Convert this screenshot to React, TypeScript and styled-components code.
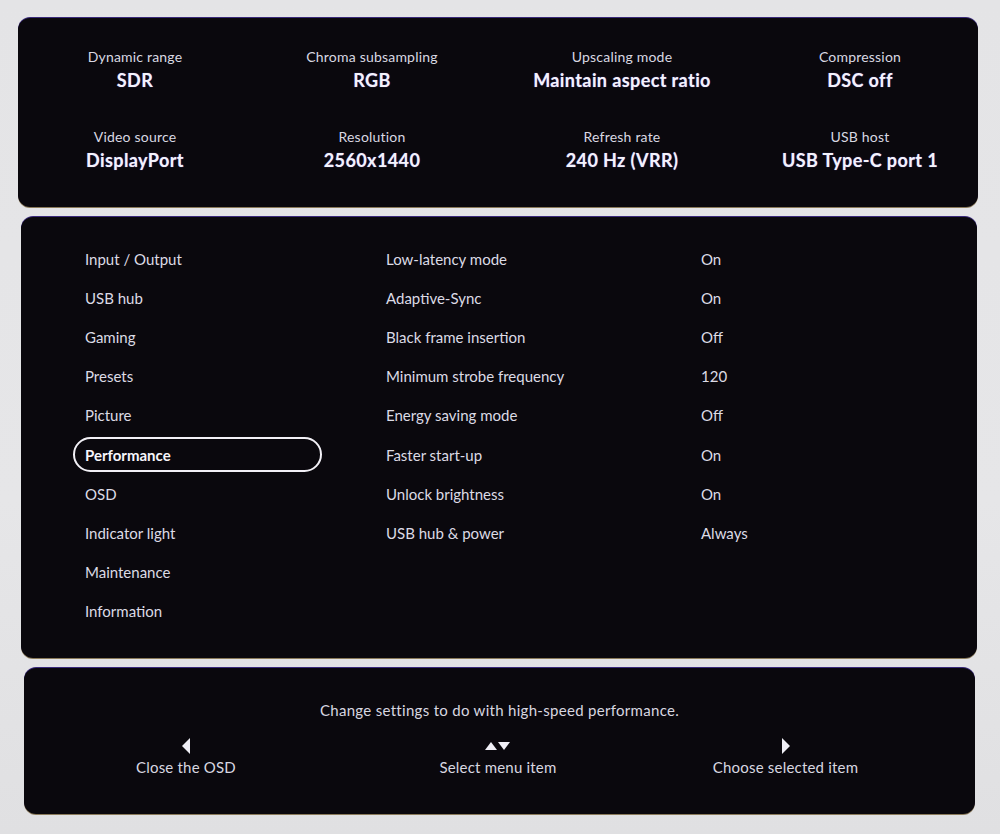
import React from "react";
import styled, { createGlobalStyle } from "styled-components";

const GlobalStyle = createGlobalStyle`
  html, body {
    margin: 0;
    padding: 0;
    background: #e3e3e5;
  }
  body {
    font-family: Lato, "Noto Sans", sans-serif;
    -webkit-font-smoothing: antialiased;
  }
`;

const Screen = styled.div`
  width: 1000px;
  height: 834px;
  padding-top: 18px;
  box-sizing: border-box;
  display: flex;
  flex-direction: column;
  gap: 10px;
  background: linear-gradient(180deg, #e4e4e6 0%, #e6e6e8 60%, #e0e0e2 100%);
`;

const Panel = styled.section<{ $left: number; $right: number; $height: number }>`
  margin-left: ${(p) => p.$left}px;
  margin-right: ${(p) => p.$right}px;
  height: ${(p) => p.$height}px;
  box-sizing: border-box;
  background: #0a080d;
  border-radius: 12px;
  box-shadow: 0 -1px 0 #3a2a7a, 0 1px 0 #8a7a5a;
  color: #ecebf3;
`;

/* ---------- status panel ---------- */

const StatusGrid = styled.div`
  display: grid;
  grid-template-columns: 234px 240px 260px 216px;
  grid-auto-rows: 80px;
  padding-top: 28px;
`;

const StatusCell = styled.div`
  display: flex;
  flex-direction: column;
  align-items: center;
  white-space: nowrap;
`;

const StatusLabel = styled.div`
  font-size: 14px;
  line-height: 22px;
  color: #d9d8e2;
  letter-spacing: 0.2px;
`;

const StatusValue = styled.div`
  font-size: 18px;
  line-height: 24px;
  font-weight: 700;
  letter-spacing: 0.4px;
  color: #f4f3fa;
  text-shadow: 0 0 1px #6a5ac8;
`;

/* ---------- main menu panel ---------- */

const MenuBody = styled.div`
  display: grid;
  grid-template-columns: 249px 379px 1fr;
  padding: 22px 0 0 52px;
`;

const MenuColumn = styled.div`
  display: flex;
  flex-direction: column;
`;

const MenuItem = styled.div<{ $active?: boolean }>`
  height: 35px;
  margin: 2.1px 0;
  box-sizing: border-box;
  display: flex;
  align-items: center;
  padding-left: 10px;
  border: 2px solid ${(p) => (p.$active ? "#f2f0f6" : "transparent")};
  border-radius: 18px;
  font-size: 15px;
  font-weight: ${(p) => (p.$active ? 700 : 400)};
  color: ${(p) => (p.$active ? "#f6f5fb" : "#dcdbe5")};
`;

const SettingColumn = styled.div<{ $offset: number }>`
  display: flex;
  flex-direction: column;
  padding-left: ${(p) => p.$offset}px;
`;

const SettingText = styled.div`
  height: 39.2px;
  display: flex;
  align-items: center;
  font-size: 15px;
  color: #dcdbe5;
  white-space: nowrap;
`;

/* ---------- help panel ---------- */

const HelpBody = styled.div`
  display: flex;
  flex-direction: column;
  align-items: center;
  padding-top: 32px;
`;

const HelpText = styled.div`
  font-size: 15px;
  line-height: 20px;
  letter-spacing: 0.3px;
  color: #d8d7e0;
`;

const KeyRow = styled.div`
  width: 100%;
  display: grid;
  grid-template-columns: 324px 300px 1fr;
  margin-top: 18px;
`;

const KeyHint = styled.div<{ $shift: number }>`
  display: flex;
  flex-direction: column;
  align-items: center;
  transform: translateX(${(p) => p.$shift}px);
`;

const KeyIcon = styled.svg`
  display: block;
  height: 16px;
`;

const KeyLabel = styled.div`
  margin-top: 3px;
  font-size: 15px;
  line-height: 20px;
  letter-spacing: 0.2px;
  color: #d8d7e0;
`;

const status = [
  ["Dynamic range", "SDR"],
  ["Chroma subsampling", "RGB"],
  ["Upscaling mode", "Maintain aspect ratio"],
  ["Compression", "DSC off"],
  ["Video source", "DisplayPort"],
  ["Resolution", "2560x1440"],
  ["Refresh rate", "240 Hz (VRR)"],
  ["USB host", "USB Type-C port 1"],
];

const menu = [
  "Input / Output",
  "USB hub",
  "Gaming",
  "Presets",
  "Picture",
  "Performance",
  "OSD",
  "Indicator light",
  "Maintenance",
  "Information",
];

const settings = [
  ["Low-latency mode", "On"],
  ["Adaptive-Sync", "On"],
  ["Black frame insertion", "Off"],
  ["Minimum strobe frequency", "120"],
  ["Energy saving mode", "Off"],
  ["Faster start-up", "On"],
  ["Unlock brightness", "On"],
  ["USB hub & power", "Always"],
];

export default function App() {
  return (
    <>
      <GlobalStyle />
      <Screen>
        <Panel $left={18} $right={22} $height={189}>
          <StatusGrid>
            {status.map(([label, value]) => (
              <StatusCell key={label}>
                <StatusLabel>{label}</StatusLabel>
                <StatusValue>{value}</StatusValue>
              </StatusCell>
            ))}
          </StatusGrid>
        </Panel>

        <Panel $left={21} $right={23} $height={441}>
          <MenuBody>
            <MenuColumn>
              {menu.map((item) => (
                <MenuItem key={item} $active={item === "Performance"}>
                  {item}
                </MenuItem>
              ))}
            </MenuColumn>
            <SettingColumn $offset={64}>
              {settings.map(([name]) => (
                <SettingText key={name}>{name}</SettingText>
              ))}
            </SettingColumn>
            <SettingColumn $offset={0}>
              {settings.map(([name, value]) => (
                <SettingText key={name}>{value}</SettingText>
              ))}
            </SettingColumn>
          </MenuBody>
        </Panel>

        <Panel $left={24} $right={25} $height={146}>
          <HelpBody>
            <HelpText>Change settings to do with high-speed performance.</HelpText>
            <KeyRow>
              <KeyHint $shift={0}>
                <KeyIcon viewBox="0 0 8 16" width="8">
                  <polygon points="8,0 8,16 0,8" fill="#f0eff6" />
                </KeyIcon>
                <KeyLabel>Close the OSD</KeyLabel>
              </KeyHint>
              <KeyHint $shift={0}>
                <KeyIcon viewBox="0 0 26 16" width="26">
                  <polygon points="0,12 6,4 12,12" fill="#f0eff6" />
                  <polygon points="13,4 25,4 19,12" fill="#f0eff6" />
                </KeyIcon>
                <KeyLabel>Select menu item</KeyLabel>
              </KeyHint>
              <KeyHint $shift={-26}>
                <KeyIcon viewBox="0 0 8 16" width="8">
                  <polygon points="0,0 8,8 0,16" fill="#f0eff6" />
                </KeyIcon>
                <KeyLabel>Choose selected item</KeyLabel>
              </KeyHint>
            </KeyRow>
          </HelpBody>
        </Panel>
      </Screen>
    </>
  );
}
